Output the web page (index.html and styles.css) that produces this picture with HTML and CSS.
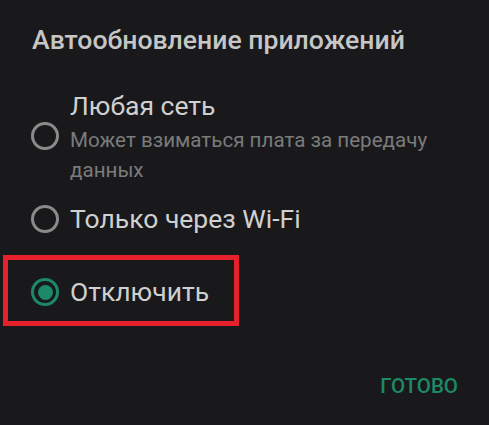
FILE: index.html
```html
<!DOCTYPE html>
<html lang="ru">
<head>
<meta charset="utf-8">
<link rel="stylesheet" href="styles.css">
</head>
<body>
<div class="dialog">
  <h1 class="title">Автообновление приложений</h1>
  <div class="options">
    <div class="option option-multi">
      <span class="radio"></span>
      <div class="label">
        <div class="label-main">Любая сеть</div>
        <div class="label-sub">Может взиматься плата за передачу данных</div>
      </div>
    </div>
    <div class="option option-wifi">
      <span class="radio"></span>
      <div class="label"><div class="label-main">Только через Wi-Fi</div></div>
    </div>
    <div class="highlight">
      <div class="option">
        <span class="radio radio-on"></span>
        <div class="label"><div class="label-main">Отключить</div></div>
      </div>
    </div>
  </div>
  <div class="actions">
    <span class="btn">ГОТОВО</span>
  </div>
</div>
</body>
</html>
```
FILE: styles.css
```css
html, body {
  margin: 0;
  padding: 0;
  background: #19191b;
}
body {
  width: 489px;
  height: 425px;
  overflow: hidden;
  font-family: Roboto, "Noto Sans", sans-serif;
}
.dialog {
  display: flex;
  flex-direction: column;
}
.title {
  margin: 0;
  padding: 24px 0 0 32px;
  font-size: 26.6px;
  font-weight: 500;
  line-height: 32px;
  color: #c6c6c6;
}
.options {
  display: flex;
  flex-direction: column;
  margin-top: 34px;
}
.option {
  display: flex;
  align-items: center;
  gap: 11px;
  padding-left: 31px;
}
.radio {
  flex: none;
  width: 28px;
  height: 28px;
  box-sizing: border-box;
  border: 3px solid #8a8a8a;
  border-radius: 50%;
  display: flex;
  align-items: center;
  justify-content: center;
}
.option-multi .radio {
  margin-bottom: 3px;
}
.radio-on {
  border-color: #1c8a66;
}
.radio-on::after {
  content: "";
  width: 15px;
  height: 15px;
  border-radius: 50%;
  background: #1c8a66;
}
.label-main {
  font-size: 26.5px;
  line-height: 32px;
  color: #d0d0d0;
}
.label-sub {
  margin-top: 3px;
  font-size: 20.6px;
  line-height: 30px;
  color: #7b7b7b;
  width: 380px;
}
.option-wifi {
  margin-top: 18px;
}
.highlight {
  margin: 20px 0 0 3px;
  width: 236px;
  height: 71px;
  box-sizing: border-box;
  border: 5px solid #e6212b;
  padding-top: 3px;
  display: flex;
  align-items: center;
}
.highlight .option {
  padding-left: 23px;
}
.actions {
  display: flex;
  justify-content: flex-end;
  padding: 48px 31px 0 0;
}
.btn {
  font-size: 20.5px;
  font-weight: 500;
  line-height: 24px;
  color: #1c8a66;
}
```
